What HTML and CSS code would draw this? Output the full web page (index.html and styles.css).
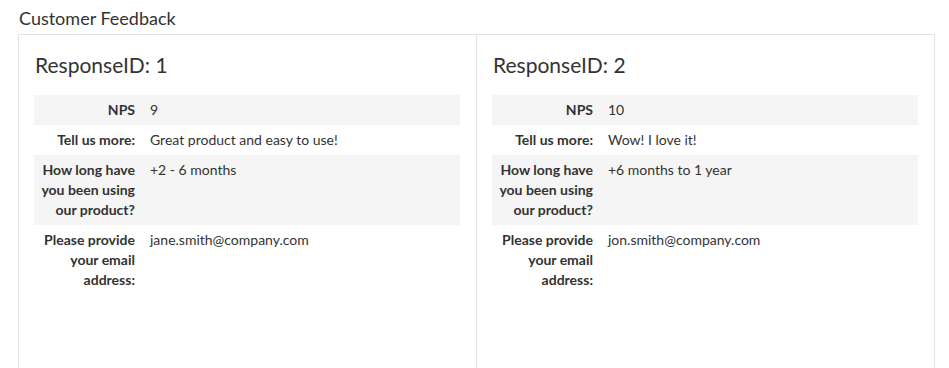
FILE: index.html
```html
<!DOCTYPE html>
<html>
<head>
<meta charset="utf-8">
<link rel="stylesheet" href="styles.css">
</head>
<body>
<div class="page">
  <div class="page-title">Customer Feedback</div>
  <div class="panel">
    <div class="card">
      <h3 class="card-title">ResponseID: 1</h3>
      <table class="resp">
        <tr class="odd"><th>NPS</th><td>9</td></tr>
        <tr><th>Tell us more:</th><td>Great product and easy to use!</td></tr>
        <tr class="odd"><th>How long have you been using our product?</th><td>+2 - 6 months</td></tr>
        <tr><th>Please provide your email address:</th><td>jane.smith@company.com</td></tr>
      </table>
    </div>
    <div class="card">
      <h3 class="card-title">ResponseID: 2</h3>
      <table class="resp">
        <tr class="odd"><th>NPS</th><td>10</td></tr>
        <tr><th>Tell us more:</th><td>Wow! I love it!</td></tr>
        <tr class="odd"><th>How long have you been using our product?</th><td>+6 months to 1 year</td></tr>
        <tr><th>Please provide your email address:</th><td>jon.smith@company.com</td></tr>
      </table>
    </div>
  </div>
</div>
</body>
</html>
```
FILE: styles.css
```css
html, body {
  margin: 0;
  padding: 0;
  background: #fff;
}
body {
  font-family: Lato, "Open Sans", sans-serif;
  color: #333;
}
.page {
  padding: 6px 14px 0 18px;
}
.page-title {
  font-size: 18px;
  line-height: 24px;
  padding-left: 1px;
  margin-bottom: 4px;
  color: #333;
}
.panel {
  display: grid;
  grid-template-columns: 457px 1fr;
  border: 1px solid #e3e3e3;
  border-bottom: none;
  height: 340px;
}
.card {
  padding: 15px 16px 0 15px;
}
.card + .card {
  border-left: 1px solid #e3e3e3;
}
.card-title {
  margin: 0 0 15px 1px;
  font-size: 21px;
  font-weight: 400;
  line-height: 30px;
  color: #333;
}
.resp {
  width: 100%;
  border-collapse: collapse;
  font-size: 14px;
  line-height: 20px;
}
.resp tr.odd {
  background: #f5f5f5;
}
.resp th {
  width: 96px;
  padding: 5px 5px 5px 5px;
  text-align: right;
  vertical-align: top;
  font-weight: 700;
}
.resp td {
  padding: 5px 5px 5px 10px;
  text-align: left;
  vertical-align: top;
}
```
